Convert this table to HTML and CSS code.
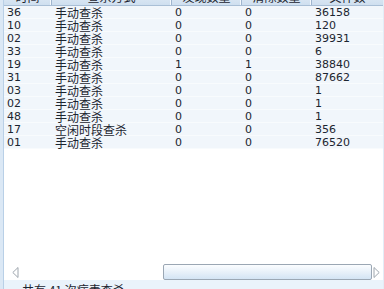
FILE: index.html
```html
<!DOCTYPE html>
<html>
<head>
<meta charset="utf-8">
<link rel="stylesheet" href="styles.css">
</head>
<body>
<div class="frame">
  <div class="grid">
    <div class="head">
      <div class="hc">时间</div>
      <div class="hc">查杀方式</div>
      <div class="hc">发现数量</div>
      <div class="hc">清除数量</div>
      <div class="hc last">文件数</div>
    </div>
    <div class="row"><span class="num">36</span><span class="cn">手动查杀</span><span class="num">0</span><span class="num">0</span><span class="num">36158</span></div>
    <div class="row"><span class="num">10</span><span class="cn">手动查杀</span><span class="num">0</span><span class="num">0</span><span class="num">120</span></div>
    <div class="row"><span class="num">02</span><span class="cn">手动查杀</span><span class="num">0</span><span class="num">0</span><span class="num">39931</span></div>
    <div class="row"><span class="num">33</span><span class="cn">手动查杀</span><span class="num">0</span><span class="num">0</span><span class="num">6</span></div>
    <div class="row"><span class="num">19</span><span class="cn">手动查杀</span><span class="num">1</span><span class="num">1</span><span class="num">38840</span></div>
    <div class="row"><span class="num">31</span><span class="cn">手动查杀</span><span class="num">0</span><span class="num">0</span><span class="num">87662</span></div>
    <div class="row"><span class="num">03</span><span class="cn">手动查杀</span><span class="num">0</span><span class="num">0</span><span class="num">1</span></div>
    <div class="row"><span class="num">02</span><span class="cn">手动查杀</span><span class="num">0</span><span class="num">0</span><span class="num">1</span></div>
    <div class="row"><span class="num">48</span><span class="cn">手动查杀</span><span class="num">0</span><span class="num">0</span><span class="num">1</span></div>
    <div class="row"><span class="num">17</span><span class="cn">空闲时段查杀</span><span class="num">0</span><span class="num">0</span><span class="num">356</span></div>
    <div class="row"><span class="num">01</span><span class="cn">手动查杀</span><span class="num">0</span><span class="num">0</span><span class="num">76520</span></div>
  </div>
  <div class="fill"></div>
  <div class="hscroll">
    <svg class="arrow" width="7" height="11" viewBox="0 0 7 11"><polygon points="6,0.5 6,10.5 0.8,5.5" fill="#fff" stroke="#9ea6ae" stroke-width="1"/></svg>
    <div class="track"><div class="thumb"></div></div>
    <svg class="arrow" width="7" height="11" viewBox="0 0 7 11"><polygon points="1,0.5 1,10.5 6.2,5.5" fill="#fff" stroke="#9ea6ae" stroke-width="1"/></svg>
  </div>
  <div class="status">共有 41 次病毒查杀</div>
</div>
</body>
</html>
```
FILE: styles.css
```css
html, body {
  margin: 0;
  padding: 0;
  background: #ffffff;
  overflow: hidden;
}
.frame {
  width: 384px;
  height: 300px;
  box-sizing: border-box;
  display: flex;
  flex-direction: column;
  border-left: 3px solid #dbe8f5;
  border-right: 1px solid #e3edf7;
  background: #ffffff;
  font-family: "DejaVu Sans", "Noto Sans CJK SC", sans-serif;
  color: #1c2530;
}
.grid {
  display: flex;
  flex-direction: column;
  border-left: 1px solid #b9d0e7;
}
.head, .row {
  display: grid;
  grid-template-columns: 48px 120px 70px 70px 1fr;
}
.head {
  height: 17px;
  margin-top: -12px;
  background: linear-gradient(#e9f1f9, #cfdfef);
  border-bottom: 1px solid #a9bfd6;
  font-family: "Noto Sans CJK SC", sans-serif;
  font-size: 12px;
  line-height: 17px;
}
.hc {
  text-align: center;
  border-right: 1px solid #9fb6cf;
  box-shadow: inset -1px 0 0 #f4f8fc;
  overflow: hidden;
  white-space: nowrap;
}
.hc.last {
  border-right: none;
  box-shadow: none;
}
.row {
  height: 13px;
  line-height: 13px;
  background: #f1f6fb;
  border-bottom: 0;
  box-shadow: inset 0 -1px 0 #f8fbfd;
}
.row > span {
  padding-left: 3px;
  white-space: nowrap;
  overflow: hidden;
}
.row > span:first-child {
  padding-left: 3px;
}
.num {
  font-size: 11px;
}
.cn {
  font-family: "Noto Sans CJK SC", sans-serif;
  font-size: 12px;
}
.fill {
  flex: 1;
  border-left: 1px solid #b9d0e7;
}
.hscroll {
  height: 16px;
  display: flex;
  align-items: center;
  padding-left: 8px;
  padding-right: 3px;
  border-left: 1px solid #b9d0e7;
}
.arrow {
  flex: none;
  display: block;
}
.track {
  flex: 1;
  height: 16px;
  display: flex;
  justify-content: flex-end;
  padding-right: 1px;
  padding-left: 1px;
}
.thumb {
  width: 207px;
  height: 14px;
  border: 1px solid #9ba7b4;
  border-radius: 2px;
  background: linear-gradient(#fbfdff, #e4eef8 60%, #d3e4f4);
}
.status {
  height: 20px;
  flex: none;
  background: #eaf3fb;
  padding-left: 18px;
  font-family: "Noto Sans CJK SC", sans-serif;
  font-size: 12px;
  line-height: 20px;
  color: #1c2530;
  border-left: 1px solid #b9d0e7;
}
```
